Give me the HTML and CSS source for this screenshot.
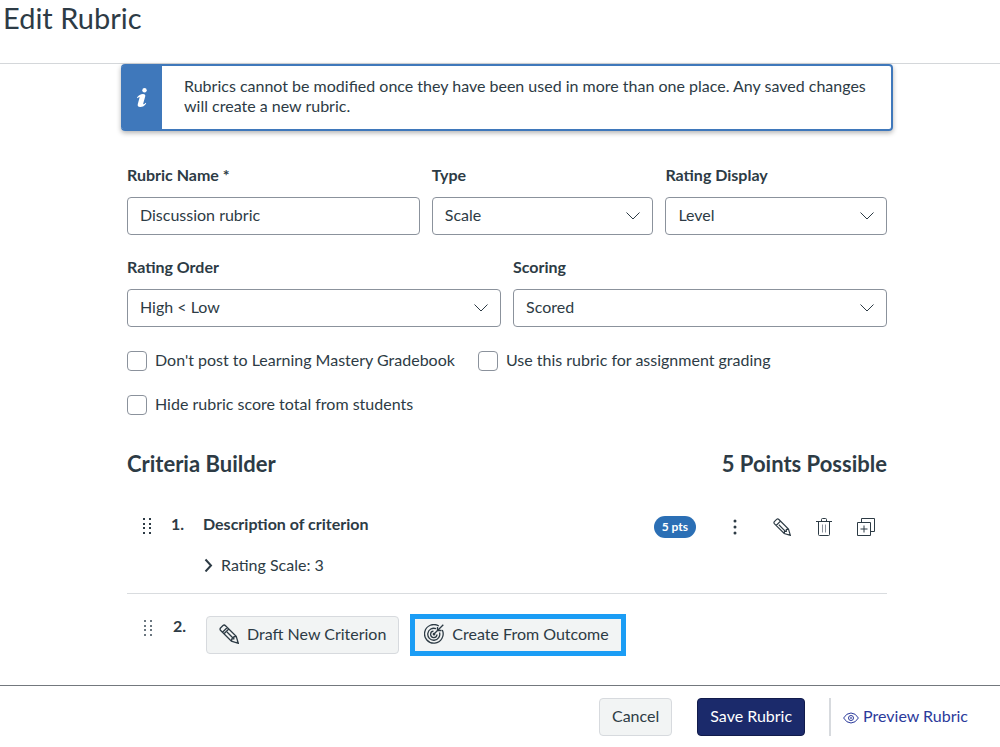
FILE: index.html
```
<!DOCTYPE html>
<html lang="en">

<head>
    <meta charset="UTF-8">
    <meta name="viewport" content="width=device-width, initial-scale=1.0">
    <title>Edit Rubric</title>
    <link rel="stylesheet" href="styles.css">
</head>

<body>

    <header class="page-header">
        <h1>Edit Rubric</h1>
    </header>

    <main class="content">
        <div class="alert">
            <div class="alert-icon">
                <svg width="12" height="20" viewBox="0 0 12 20" fill="#fff" aria-hidden="true">
                    <circle cx="8.500" cy="2.300" r="2.200"/>
                    <path d="M1 9.600C2.600 7.300 4.600 6 7 6c2 0 2.600 1.100 2.200 2.600L7.300 15.300c-.2.800.1 1 .5.900.6-.2 1.200-.7 1.700-1.400l.7.600C8.700 17.600 6.500 19 4.300 19c-2.200 0-3-1.200-2.500-3L3.500 9.800c.2-.7 0-1-.4-.9-.5.100-.9.600-1.400 1.300z"/>
                </svg>
            </div>
            <p class="alert-text">Rubrics cannot be modified once they have been used in more than one place. Any saved changes will create a new rubric.</p>
        </div>

        <form class="rubric-form" id="rubricForm">
            <div class="form-row form-row-name">
                <div class="form-group">
                    <label for="rubricName">Rubric Name *</label>
                    <input type="text" id="rubricName" name="rubricName" value="Discussion rubric">
                </div>
                <div class="form-group">
                    <label for="type">Type</label>
                    <div class="select-box">
                        <select id="type" name="type">
                            <option>Scale</option>
                        </select>
                        <svg class="arrow" viewBox="0 0 16 10" aria-hidden="true"><path d="M1.500 1.500L8 8l6.500-6.500"/></svg>
                    </div>
                </div>
                <div class="form-group">
                    <label for="ratingDisplay">Rating Display</label>
                    <div class="select-box">
                        <select id="ratingDisplay" name="ratingDisplay">
                            <option>Level</option>
                        </select>
                        <svg class="arrow" viewBox="0 0 16 10" aria-hidden="true"><path d="M1.500 1.500L8 8l6.500-6.500"/></svg>
                    </div>
                </div>
            </div>

            <div class="form-row form-row-half">
                <div class="form-group">
                    <label for="ratingOrder">Rating Order</label>
                    <div class="select-box">
                        <select id="ratingOrder" name="ratingOrder">
                            <option>High &lt; Low</option>
                        </select>
                        <svg class="arrow" viewBox="0 0 16 10" aria-hidden="true"><path d="M1.500 1.500L8 8l6.500-6.500"/></svg>
                    </div>
                </div>
                <div class="form-group">
                    <label for="scoring">Scoring</label>
                    <div class="select-box">
                        <select id="scoring" name="scoring">
                            <option>Scored</option>
                        </select>
                        <svg class="arrow" viewBox="0 0 16 10" aria-hidden="true"><path d="M1.500 1.500L8 8l6.500-6.500"/></svg>
                    </div>
                </div>
            </div>

            <div class="checks">
                <label class="check"><input type="checkbox" name="noMastery">Don't post to Learning Mastery Gradebook</label>
                <label class="check"><input type="checkbox" name="useForGrading">Use this rubric for assignment grading</label>
                <label class="check"><input type="checkbox" name="hideTotal">Hide rubric score total from students</label>
            </div>
        </form>

        <section class="criteria">
            <div class="criteria-title">
                <h2>Criteria Builder</h2>
                <h2>5 Points Possible</h2>
            </div>

            <div class="criterion">
                <svg class="drag" viewBox="0 0 10 18" aria-hidden="true">
                    <path d="M1 1h2v2H1zM7 1h2v2H7zM1 6h2v2H1zM7 6h2v2H7zM1 10h2v2H1zM7 10h2v2H7zM1 15h2v2H1zM7 15h2v2H7z"/>
                </svg>
                <span class="number">1.</span>
                <div class="criterion-info">
                    <h3>Description of criterion</h3>
                    <button type="button" class="toggle">
                        <svg width="10" height="14" viewBox="0 0 10 14" fill="none" stroke="#2d3b45" stroke-width="2" aria-hidden="true"><path d="M2.500 1.500L8 7.500 2.500 13.500"/></svg>
                        Rating Scale: 3
                    </button>
                </div>
                <span class="points">5 pts</span>
                <div class="actions">
                    <button type="button" class="icon-btn" aria-label="Options">
                        <svg width="18" height="18" viewBox="0 0 18 18" fill="#2d3b45"><circle cx="9" cy="3" r="1.500"/><circle cx="9" cy="9" r="1.500"/><circle cx="9" cy="15" r="1.500"/></svg>
                    </button>
                    <button type="button" class="icon-btn" aria-label="Edit criterion">
                        <svg class="line-icon pencil" width="18" height="18" viewBox="0 0 20 20"><path d="M1.500 4L4 1.500Q5.300.5 6.500 1.700L17.200 12.400 19.300 19.300 12.400 17.200 1.700 6.500Q.5 5.300 1.500 4zM3.500 8.300L8.300 3.500M12.400 17.200L12.800 14.800 14.800 14.800 14.800 12.800 17.200 12.400M6.500 7.500L13.500 14.500M17.500 18.800L18.800 17.500"/></svg>
                    </button>
                    <button type="button" class="icon-btn" aria-label="Delete criterion">
                        <svg class="line-icon" width="18" height="18" viewBox="0 0 18 18"><path d="M3.500 3.500v13q0 1 1 1h9q1 0 1-1v-13M6.500 3.500v-2q0-1 1-1h3q1 0 1 1v2M1 3.500h16"/><path class="soft" d="M7.500 6.500v8M10.500 6.500v8"/></svg>
                    </button>
                    <button type="button" class="icon-btn" aria-label="Duplicate criterion">
                        <svg class="line-icon" width="18" height="18" viewBox="0 0 18 18"><path d="M.5 4.500h13v13H.5zM4.500 4.500v-4h13v13h-4"/><path d="M7 7.500v7M3.500 11h7"/></svg>
                    </button>
                </div>
            </div>

            <div class="criterion criterion-new">
                <svg class="drag drag-light" viewBox="0 0 10 18" aria-hidden="true">
                    <path d="M1 1h2v2H1zM7 1h2v2H7zM1 6h2v2H1zM7 6h2v2H7zM1 10h2v2H1zM7 10h2v2H7zM1 15h2v2H1zM7 15h2v2H7z"/>
                </svg>
                <span class="number">2.</span>
                <div class="new-buttons">
                    <button type="button" class="btn">
                        <svg class="line-icon pencil" width="20" height="20" viewBox="0 0 20 20" aria-hidden="true"><path d="M1.500 4L4 1.500Q5.300.5 6.500 1.700L17.200 12.400 19.300 19.300 12.400 17.200 1.700 6.500Q.5 5.300 1.500 4zM3.500 8.300L8.300 3.500M5 9.800L9.800 5M12.400 17.200L12.800 14.800 14.800 14.800 14.800 12.800 17.200 12.400M8 8L14 14M17.500 18.800L18.800 17.500"/></svg>
                        Draft New Criterion
                    </button>
                    <button type="button" class="btn btn-outcome">
                        <svg class="line-icon target" width="20" height="20" viewBox="0 0 20 20" aria-hidden="true"><path d="M14.800 2A9.300 9.300 0 1 0 18.300 6M12 4.700A6 6 0 1 0 15.500 8.500M9.500 7.200A3.200 3.200 0 1 0 13 10.500M10.500 9.500L19.300.7M13.500 3V6.500H17.500"/><circle cx="10" cy="10.200" r=".7"/></svg>
                        Create From Outcome
                    </button>
                </div>
            </div>
        </section>
    </main>

    <footer class="page-footer">
        <button type="button" class="btn">Cancel</button>
        <button type="submit" form="rubricForm" class="btn btn-primary">Save Rubric</button>
        <div class="preview">
            <a href="#preview">
                <svg class="eye" width="16" height="12" viewBox="0 0 16 12" fill="none" stroke="#2b3a9b" aria-hidden="true"><path d="M.6 6Q3.500 1 8 1t7.400 5Q12.500 11 8 11T.6 6z"/><circle cx="8" cy="6" r="2.500"/><circle cx="8" cy="6" r=".5"/></svg>
                Preview Rubric
            </a>
        </div>
    </footer>

</body>

</html>
```
FILE: styles.css
```
* {
    box-sizing: border-box;
}

body {
    font-family: Lato, "Open Sans", sans-serif;
    font-size: 16px;
    line-height: 20px;
    color: #2d3b45;
    background-color: #fff;
    display: flex;
    flex-direction: column;
    min-height: 100vh;
    margin: 0;
}

h1,
h2,
h3,
p {
    margin: 0;
}

button,
input,
select {
    font: inherit;
    color: inherit;
}

button {
    cursor: pointer;
}

.page-header {
    padding: 0 3px 27px;
    border-bottom: 1px solid #d4d7da;
}

.page-header h1 {
    font-size: 29px;
    font-weight: 400;
    line-height: 36px;
}

.content {
    flex: 1;
    padding: 0 107px 0 121px;
}

.alert {
    display: flex;
    border: 2px solid #3f78bb;
    border-left: none;
    border-radius: 4px;
    box-shadow: 0 2px 5px rgba(0, 0, 0, 0.3);
}

.alert-icon {
    display: flex;
    align-items: center;
    justify-content: center;
    flex: none;
    width: 41px;
    background-color: #3f78bb;
    border-radius: 2px 0 0 2px;
}

.alert-text {
    padding: 10px 22px 13px;
}

.rubric-form {
    padding: 34px 6px 0;
}

.form-row {
    display: grid;
    gap: 12px;
    margin-bottom: 22px;
}

.form-row-name {
    grid-template-columns: 37fr 28fr 28fr;
}

.form-row-half {
    grid-template-columns: 1fr 1fr;
}

.form-group label {
    display: block;
    margin-bottom: 12px;
    font-weight: 700;
}

.form-group input,
.form-group select {
    width: 100%;
    height: 38px;
    padding: 0 12px 2px;
    border: 1px solid #8b929c;
    border-radius: 4px;
    background-color: #fff;
}

.form-group input {
    padding-bottom: 4px;
}

.select-box {
    display: grid;
    align-items: center;
}

.select-box select,
.select-box .arrow {
    grid-area: 1 / 1;
}

.select-box select {
    appearance: none;
}

.arrow {
    justify-self: end;
    width: 16px;
    height: 10px;
    margin-right: 12px;
    fill: none;
    stroke: #2d3b45;
    pointer-events: none;
}

.checks {
    display: flex;
    flex-wrap: wrap;
    gap: 22px 23px;
}

.check {
    display: flex;
    align-items: center;
    gap: 8px;
    height: 22px;
}

.check input {
    appearance: none;
    width: 20px;
    height: 20px;
    margin: 1px 0 0;
    border: 1px solid #8b929c;
    border-radius: 4px;
}

.check input:checked {
    background-color: #2d3b45;
}

.criteria {
    padding: 35px 6px 0;
}

.criteria-title {
    display: flex;
    justify-content: space-between;
    margin-bottom: 36px;
}

.criteria-title h2 {
    font-size: 22px;
    line-height: 28px;
}

.criterion {
    display: flex;
    align-items: flex-start;
    padding-bottom: 18px;
    border-bottom: 1px solid #d9dcdf;
}

.drag {
    flex: none;
    width: 10px;
    height: 18px;
    margin: 3px 19px 0 15px;
    fill: #2d3b45;
}

.drag-light {
    fill: #6b7780;
}

.number {
    width: 32px;
    font-weight: 700;
}

.criterion-info {
    flex: 1;
}

.criterion-info h3 {
    font-size: 16px;
    margin-bottom: 21px;
}

.toggle {
    display: flex;
    align-items: center;
    gap: 8px;
    padding: 0;
    border: none;
    background: none;
}

.points {
    margin-top: 2px;
    padding: 1px 8px;
    border-radius: 12px;
    background-color: #2b6fb5;
    color: #fff;
    font-size: 12px;
    font-weight: 700;
}

.actions {
    display: flex;
    gap: 4px;
    margin: 4px 2px 0 20px;
}

.icon-btn {
    display: flex;
    justify-content: center;
    width: 38px;
    padding: 0;
    border: none;
    background: none;
}

.icon-btn:first-child {
    margin-right: 5px;
}

.line-icon {
    flex: none;
    fill: none;
    stroke: #2d3b45;
}

.line-icon .soft {
    stroke: #8b929c;
}

.pencil,
.target {
    stroke-width: 1.3;
}

.criterion-new {
    padding: 20px 0 0 2px;
    border-bottom: none;
}

.criterion-new .drag {
    margin: 5px 20px 0 14px;
}

.criterion-new .number {
    width: 33px;
    padding-top: 2px;
}

.new-buttons {
    display: flex;
    align-items: center;
    gap: 11px;
}

.btn {
    display: flex;
    align-items: center;
    gap: 8px;
    height: 38px;
    padding: 0 12px 2px;
    border: 1px solid #d7dade;
    border-radius: 4px;
    background-color: #f2f4f4;
}

.btn-outcome {
    height: 42px;
    padding: 0 12px 3px 9px;
    border: 5px solid #1b9df5;
    border-radius: 0;
}

.btn-primary {
    margin: 0 24px 0 25px;
    border-color: #111b4b;
    background-color: #1b2a6b;
    color: #fff;
}

.page-footer {
    display: flex;
    justify-content: flex-end;
    padding: 12px 32px 11px;
    border-top: 1px solid #73787d;
}

.preview {
    display: flex;
    padding: 8px 0 0 12px;
    border-left: 2px solid #d7dade;
}

.preview a {
    display: flex;
    align-items: baseline;
    gap: 4px;
    color: #2b3a9b;
    text-decoration: none;
}

.eye {
    align-self: flex-start;
    margin-top: 6px;
}
```
